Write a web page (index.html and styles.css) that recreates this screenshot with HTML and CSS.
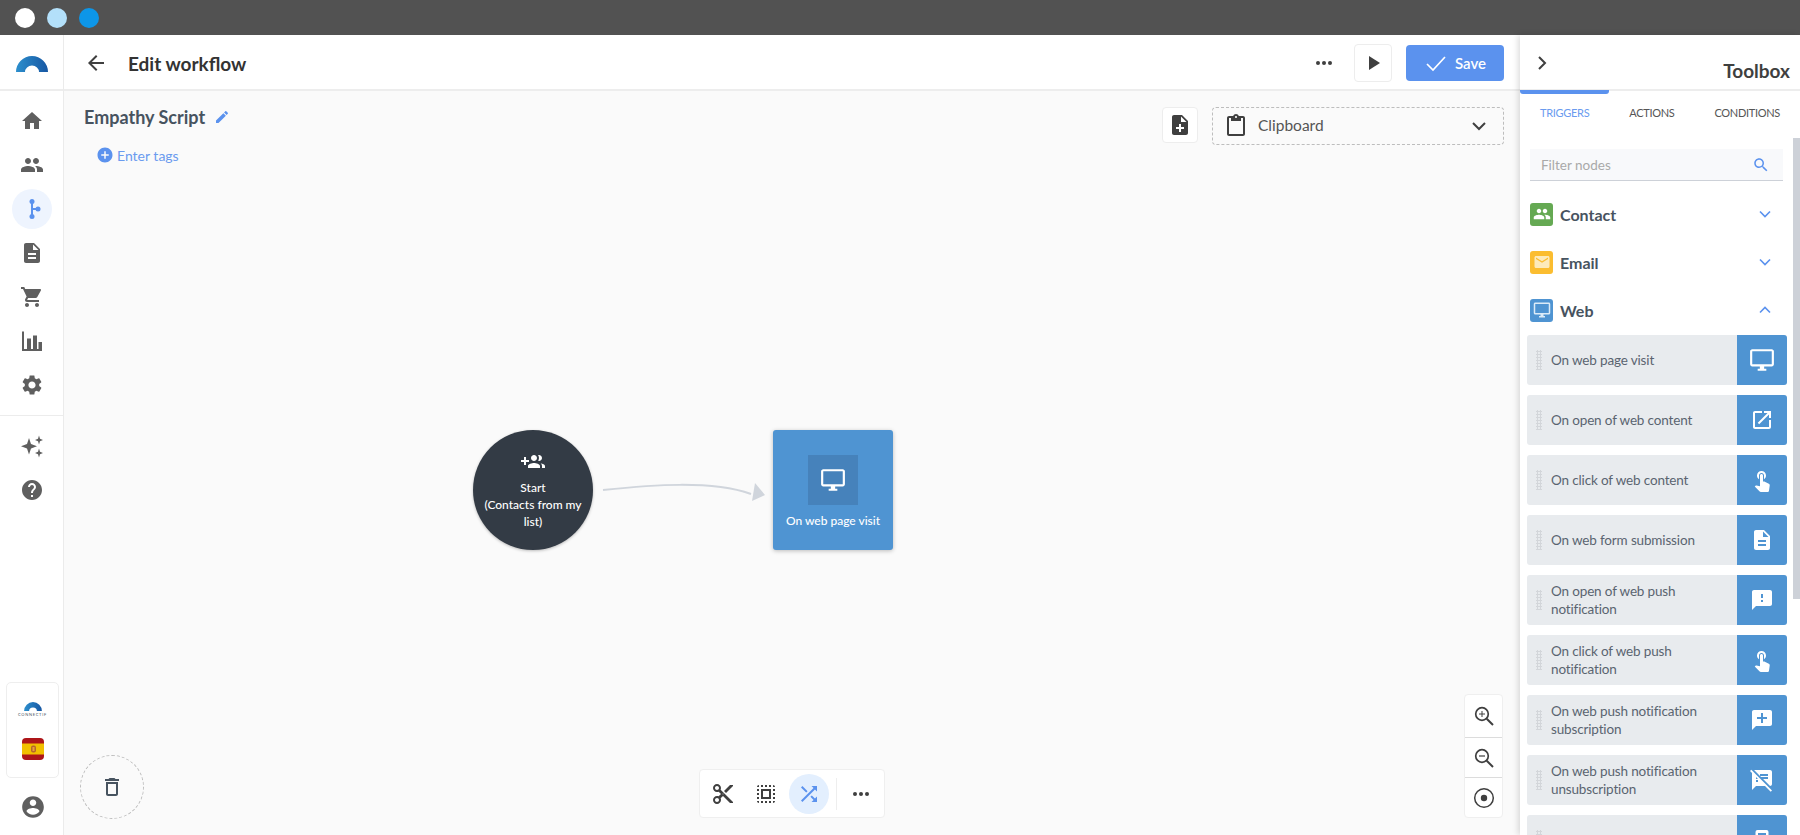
FILE: index.html
```html
<!DOCTYPE html>
<html lang="en">
<head>
<meta charset="utf-8">
<title>Edit workflow</title>
<link rel="stylesheet" href="styles.css">
</head>
<body>
<svg class="sprite" xmlns="http://www.w3.org/2000/svg">
  <defs>
    <linearGradient id="logoGrad" x1="0" x2="1" y1="0" y2="0"><stop offset="0" stop-color="#2c8fcd"/><stop offset="1" stop-color="#1757a3"/></linearGradient>
  </defs>
  <symbol id="i-home" viewBox="0 0 24 24"><path d="M10 20v-6h4v6h5v-8h3L12 3 2 12h3v8z"/></symbol>
  <symbol id="i-people" viewBox="0 0 24 24"><path d="M16 11c1.66 0 2.99-1.34 2.99-3S17.66 5 16 5c-1.66 0-3 1.34-3 3s1.34 3 3 3zm-8 0c1.66 0 2.99-1.34 2.99-3S9.66 5 8 5C6.34 5 5 6.34 5 8s1.34 3 3 3zm0 2c-2.33 0-7 1.17-7 3.5V19h14v-2.5c0-2.33-4.67-3.5-7-3.5zm8 0c-.29 0-.62.02-.97.05 1.16.84 1.97 1.97 1.97 3.45V19h6v-2.5c0-2.33-4.67-3.5-7-3.5z"/></symbol>
  <symbol id="i-flow" viewBox="0 0 24 24"><path d="M11 5h2v14h-2z"/><path d="M12 11h6v2h-6z"/><circle cx="12" cy="4.5" r="2.5"/><circle cx="12" cy="19.5" r="2.5"/><circle cx="18" cy="12" r="2.5"/></symbol>
  <symbol id="i-doc" viewBox="0 0 24 24"><path d="M14 2H6c-1.1 0-1.99.9-1.99 2L4 20c0 1.1.89 2 1.99 2H18c1.1 0 2-.9 2-2V8l-6-6zm2 16H8v-2h8v2zm0-4H8v-2h8v2zm-3-5V3.5L18.5 9H13z"/></symbol>
  <symbol id="i-cart" viewBox="0 0 24 24"><path d="M7 18c-1.1 0-1.99.9-1.99 2S5.9 22 7 22s2-.9 2-2-.9-2-2-2zM1 2v2h2l3.6 7.59-1.35 2.45c-.16.28-.25.61-.25.96 0 1.1.9 2 2 2h12v-2H7.42c-.14 0-.25-.11-.25-.25l.03-.12.9-1.63h7.45c.75 0 1.41-.41 1.75-1.03l3.58-6.49c.08-.14.12-.31.12-.48 0-.55-.45-1-1-1H5.21l-.94-2H1zm16 16c-1.1 0-1.99.9-1.99 2s.89 2 1.99 2 2-.9 2-2-.9-2-2-2z"/></symbol>
  <symbol id="i-chart" viewBox="0 0 24 24"><path d="M2 2.500h2V20h3V9.500h4V20h2V6.500h4V20h1.500v-7H22v9H2z"/></symbol>
  <symbol id="i-gear" viewBox="0 0 24 24"><path d="M19.14 12.94c.04-.3.06-.61.06-.94 0-.32-.02-.64-.07-.94l2.03-1.58c.18-.14.23-.41.12-.61l-1.92-3.32c-.12-.22-.37-.29-.59-.22l-2.39.96c-.5-.38-1.03-.7-1.62-.94l-.36-2.54c-.04-.24-.24-.41-.48-.41h-3.84c-.24 0-.43.17-.47.41l-.36 2.54c-.59.24-1.13.57-1.62.94l-2.39-.96c-.22-.08-.47 0-.59.22L2.74 8.87c-.12.21-.08.47.12.61l2.03 1.58c-.05.3-.09.63-.09.94s.02.64.07.94l-2.03 1.58c-.18.14-.23.41-.12.61l1.92 3.32c.12.22.37.29.59.22l2.39-.96c.5.38 1.03.7 1.62.94l.36 2.54c.05.24.24.41.48.41h3.84c.24 0 .44-.17.47-.41l.36-2.54c.59-.24 1.13-.56 1.62-.94l2.39.96c.22.08.47 0 .59-.22l1.92-3.32c.12-.22.07-.47-.12-.61l-2.01-1.58zM12 15.6c-1.98 0-3.6-1.62-3.6-3.6s1.62-3.6 3.6-3.6 3.6 1.62 3.6 3.6-1.62 3.6-3.6 3.6z"/></symbol>
  <symbol id="i-sparkle" viewBox="0 0 24 24"><path d="M19 1.500l1 3.300 3 1.200-3 1.200-1 3.300-1-3.300-3-1.200 3-1.200zM9 4l2 6 6 2.200-6 2.200-2 6-2-6-6-2.200 6-2.200zM19 14.500l1 3.200 3 1.300-3 1.300-1 3.200-1-3.200-3-1.300 3-1.300z"/></symbol>
  <symbol id="i-help" viewBox="0 0 24 24"><path d="M12 2C6.48 2 2 6.48 2 12s4.48 10 10 10 10-4.48 10-10S17.52 2 12 2zm1 17h-2v-2h2v2zm2.07-7.75l-.9.92C13.45 12.9 13 13.5 13 15h-2v-.5c0-1.1.45-2.1 1.17-2.83l1.24-1.26c.37-.36.59-.86.59-1.41 0-1.1-.9-2-2-2s-2 .9-2 2H8c0-2.21 1.79-4 4-4s4 1.79 4 4c0 .88-.36 1.68-.93 2.25z"/></symbol>
  <symbol id="i-account" viewBox="0 0 24 24"><path d="M12 2C6.48 2 2 6.48 2 12s4.48 10 10 10 10-4.48 10-10S17.52 2 12 2zm0 3c1.66 0 3 1.34 3 3s-1.34 3-3 3-3-1.34-3-3 1.34-3 3-3zm0 14.2c-2.5 0-4.71-1.28-6-3.22.03-1.99 4-3.08 6-3.08 1.99 0 5.97 1.09 6 3.08-1.29 1.94-3.5 3.22-6 3.22z"/></symbol>
  <symbol id="i-back" viewBox="0 0 24 24"><path d="M20 11H7.83l5.59-5.59L12 4l-8 8 8 8 1.41-1.41L7.83 13H20v-2z"/></symbol>
  <symbol id="i-edit" viewBox="0 0 24 24"><path d="M3 17.25V21h3.75L17.81 9.94l-3.75-3.75L3 17.25zM20.71 7.04c.39-.39.39-1.02 0-1.41l-2.34-2.34c-.39-.39-1.02-.39-1.41 0l-1.83 1.83 3.75 3.75 1.83-1.83z"/></symbol>
  <symbol id="i-add" viewBox="0 0 24 24"><path d="M12 2C6.48 2 2 6.48 2 12s4.48 10 10 10 10-4.48 10-10S17.52 2 12 2zm5 11h-4v4h-2v-4H7v-2h4V7h2v4h4v2z"/></symbol>
  <symbol id="i-play" viewBox="0 0 24 24"><path d="M8 5v14l11-7z"/></symbol>
  <symbol id="i-more" viewBox="0 0 24 24"><circle cx="6" cy="12" r="2"/><circle cx="12" cy="12" r="2"/><circle cx="18" cy="12" r="2"/></symbol>
  <symbol id="i-note" viewBox="0 0 24 24"><path d="M14 2H6c-1.1 0-1.99.9-1.99 2L4 20c0 1.1.89 2 1.99 2H18c1.1 0 2-.9 2-2V8l-6-6zm2 14h-3v3h-2v-3H8v-2h3v-3h2v3h3v2zm-3-7V3.5L18.5 9H13z"/></symbol>
  <symbol id="i-paste" viewBox="0 0 24 24"><path d="M19 2h-4.18C14.4.84 13.3 0 12 0c-1.3 0-2.4.84-2.82 2H5c-1.1 0-2 .9-2 2v16c0 1.1.9 2 2 2h14c1.1 0 2-.9 2-2V4c0-1.1-.9-2-2-2zm-7 0c.55 0 1 .45 1 1s-.45 1-1 1-1-.45-1-1 .45-1 1-1zm7 18H5V4h2v3h10V4h2v16z"/></symbol>
  <symbol id="i-search" viewBox="0 0 24 24"><path d="M15.5 14h-.79l-.28-.27C15.41 12.59 16 11.11 16 9.5 16 5.91 13.09 3 9.5 3S3 5.91 3 9.5 5.91 16 9.5 16c1.61 0 3.09-.59 4.23-1.57l.27.28v.79l5 4.99L20.49 19l-4.99-5zm-6 0C7.01 14 5 11.99 5 9.5S7.01 5 9.5 5 14 7.01 14 9.5 11.99 14 9.5 14z"/></symbol>
  <symbol id="i-desktop" viewBox="0 0 24 24"><path d="M21 2H3c-1.1 0-2 .9-2 2v12c0 1.1.9 2 2 2h7v2H8v2h8v-2h-2v-2h7c1.1 0 2-.9 2-2V4c0-1.1-.9-2-2-2zm0 14H3V4h18v12z"/></symbol>
  <symbol id="i-open" viewBox="0 0 24 24"><path d="M19 19H5V5h7V3H5c-1.11 0-2 .9-2 2v14c0 1.1.89 2 2 2h14c1.1 0 2-.9 2-2v-7h-2v7zM14 3v2h3.59l-9.83 9.83 1.41 1.41L19 6.41V10h2V3h-7z"/></symbol>
  <symbol id="i-touch" viewBox="0 0 24 24"><path d="M9 11.24V7.5C9 6.12 10.12 5 11.5 5S14 6.12 14 7.5v3.74c1.21-.81 2-2.18 2-3.74C16 5.01 13.99 3 11.5 3S7 5.01 7 7.5c0 1.56.79 2.93 2 3.74zm9.84 4.63l-4.54-2.26c-.17-.07-.35-.11-.54-.11H13v-6c0-.83-.67-1.5-1.5-1.5S10 6.67 10 7.5v10.74l-3.43-.72c-.08-.01-.15-.03-.24-.03-.31 0-.59.13-.79.33l-.79.8 4.94 4.94c.27.27.65.44 1.06.44h6.79c.75 0 1.33-.55 1.44-1.28l.75-5.27c.01-.07.02-.14.02-.2 0-.62-.38-1.16-.91-1.38z"/></symbol>
  <symbol id="i-failed" viewBox="0 0 24 24"><path d="M20 2H4c-1.1 0-1.99.9-1.99 2L2 22l4-4h14c1.1 0 2-.9 2-2V4c0-1.1-.9-2-2-2zm-7 12h-2v-2h2v2zm0-4h-2V6h2v4z"/></symbol>
  <symbol id="i-comment" viewBox="0 0 24 24"><path d="M20 2H4c-1.1 0-1.99.9-1.99 2L2 22l4-4h14c1.1 0 2-.9 2-2V4c0-1.1-.9-2-2-2zm-3 9h-4v4h-2v-4H7V9h4V5h2v4h4v2z"/></symbol>
  <symbol id="i-notesoff" viewBox="0 0 24 24"><path d="M10.54 11l-.54-.54L7.54 8 6 6.46 2.38 2.84 1.27 1.73 0 3l2.01 2.01L2 22l4-4h9l5.73 5.73L22 22.46 17.54 18l-7-7zM8 14H6v-2h2v2zm-2-3V9l2 2H6zm14-9H4.08L10 7.92V6h8v2h-7.92l1 1H18v2h-4.92l6.99 6.99C21.14 17.95 22 17.08 22 16V4c0-1.1-.9-2-2-2z"/></symbol>
  <symbol id="i-tablet" viewBox="0 0 24 24"><path fill-rule="evenodd" d="M7.500 2h9a2 2 0 0 1 2 2v16a2 2 0 0 1-2 2h-9a2 2 0 0 1-2-2V4a2 2 0 0 1 2-2zM8 5v7h8V5z"/></symbol>
  <symbol id="i-email" viewBox="0 0 24 24"><path d="M20 4H4c-1.1 0-1.99.9-1.99 2L2 18c0 1.1.9 2 2 2h16c1.1 0 2-.9 2-2V6c0-1.1-.9-2-2-2zm0 4l-8 5-8-5V6l8 5 8-5v2z"/></symbol>
  <symbol id="i-groupadd" viewBox="0 0 24 24"><path d="M8 10H5V7H3v3H0v2h3v3h2v-3h3v-2zm10 1c1.66 0 2.99-1.34 2.99-3S19.66 5 18 5c-.32 0-.63.05-.91.14.57.81.9 1.79.9 2.86s-.34 2.04-.9 2.86c.28.09.59.14.91.14zm-5 0c1.66 0 2.99-1.34 2.99-3S14.66 5 13 5s-3 1.34-3 3 1.34 3 3 3zm6.62 2.16c.83.73 1.38 1.66 1.38 2.84v2h3v-2c0-1.54-2.37-2.49-4.38-2.84zM13 13c-2 0-6 1-6 3v2h12v-2c0-2-4-3-6-3z"/></symbol>
  <symbol id="i-cut" viewBox="0 0 24 24"><path d="M9.64 7.64c.23-.5.36-1.05.36-1.64 0-2.21-1.79-4-4-4S2 3.79 2 6s1.79 4 4 4c.59 0 1.14-.13 1.64-.36L10 12l-2.36 2.36C7.14 14.13 6.59 14 6 14c-2.21 0-4 1.79-4 4s1.79 4 4 4 4-1.79 4-4c0-.59-.13-1.14-.36-1.64L12 14l7 7h3v-1L9.64 7.64zM6 8c-1.1 0-2-.89-2-2s.9-2 2-2 2 .89 2 2-.9 2-2 2zm0 12c-1.1 0-2-.89-2-2s.9-2 2-2 2 .89 2 2-.9 2-2 2zm6-7.5c-.28 0-.5-.22-.5-.5s.22-.5.5-.5.5.22.5.5-.22.5-.5.5zM19 3l-6 6 2 2 7-7V3z"/></symbol>
  <symbol id="i-select" viewBox="0 0 24 24"><path d="M3 5h2V3c-1.1 0-2 .9-2 2zm0 8h2v-2H3v2zm4 8h2v-2H7v2zM3 9h2V7H3v2zm10-6h-2v2h2V3zm6 0v2h2c0-1.1-.9-2-2-2zM5 21v-2H3c0 1.1.9 2 2 2zm-2-4h2v-2H3v2zM9 3H7v2h2V3zm2 18h2v-2h-2v2zm8-8h2v-2h-2v2zm0 8c1.1 0 2-.9 2-2h-2v2zm0-12h2V7h-2v2zm0 8h2v-2h-2v2zm-4 4h2v-2h-2v2zm0-16h2V3h-2v2zM7 17h10V7H7v10zm2-8h6v6H9V9z"/></symbol>
  <symbol id="i-shuffle" viewBox="0 0 24 24"><path d="M10.59 9.17L5.41 4 4 5.41l5.17 5.17 1.42-1.41zM14.5 4l2.04 2.04L4 18.59 5.41 20 17.96 7.46 20 9.5V4h-5.500zm.33 9.41l-1.41 1.41 3.13 3.13L14.5 20H20v-5.500l-2.04 2.04-3.13-3.13z"/></symbol>
  <symbol id="i-zoomin" viewBox="0 0 24 24"><g fill="none" stroke="currentColor"><circle cx="10" cy="10" r="6.300" stroke-width="1.700"/><path d="M14.700 14.700L21 21" stroke-width="2"/><path d="M7 10h6M10 7v6" stroke-width="1"/></g></symbol>
  <symbol id="i-zoomout" viewBox="0 0 24 24"><g fill="none" stroke="currentColor"><circle cx="10" cy="10" r="6.300" stroke-width="1.700"/><path d="M14.700 14.700L21 21" stroke-width="2"/><path d="M7 10h6" stroke-width="1.200"/></g></symbol>
  <symbol id="i-center" viewBox="0 0 24 24"><circle cx="12" cy="12" r="9.300" fill="none" stroke="currentColor" stroke-width="1.500"/><circle cx="12" cy="12" r="3.200"/></symbol>
  <symbol id="i-trash" viewBox="0 0 24 24"><path d="M6 19c0 1.1.9 2 2 2h8c1.1 0 2-.9 2-2V7H6v12zM8 9h8v10H8V9zm7.5-5l-1-1h-5l-1 1H5v2h14V4z"/></symbol>
  <symbol id="i-down" viewBox="0 0 24 24"><path d="M6 9l6 6 6-6" fill="none" stroke="currentColor" stroke-width="2"/></symbol>
  <symbol id="i-up" viewBox="0 0 24 24"><path d="M6 15l6-6 6 6" fill="none" stroke="currentColor" stroke-width="2"/></symbol>
  <symbol id="i-right" viewBox="0 0 24 24"><path d="M9 6l6 6-6 6" fill="none" stroke="currentColor" stroke-width="2"/></symbol>
  <symbol id="i-check" viewBox="0 0 24 24"><path d="M3 13l6 6L21 6" fill="none" stroke="currentColor" stroke-width="1.700"/></symbol>
</svg>

<div class="titlebar">
  <span class="dot dot-white"></span>
  <span class="dot dot-light"></span>
  <span class="dot dot-blue"></span>
</div>

<div class="app">
  <aside class="sidebar">
    <div class="side-logo">
      <svg class="logo" viewBox="0 0 32 18"><path fill="url(#logoGrad)" d="M0 18A16 16 0 0 1 32 18H23A7 6.500 0 0 0 9 18z"/></svg>
    </div>
    <nav class="side-nav">
      <a class="nav-item"><svg class="ic-24"><use href="#i-home"/></svg></a>
      <a class="nav-item"><svg class="ic-24"><use href="#i-people"/></svg></a>
      <a class="nav-item is-active"><svg class="ic-24"><use href="#i-flow"/></svg></a>
      <a class="nav-item"><svg class="ic-24"><use href="#i-doc"/></svg></a>
      <a class="nav-item"><svg class="ic-24"><use href="#i-cart"/></svg></a>
      <a class="nav-item"><svg class="ic-24"><use href="#i-chart"/></svg></a>
      <a class="nav-item"><svg class="ic-24"><use href="#i-gear"/></svg></a>
      <div class="nav-divider"></div>
      <a class="nav-item"><svg class="ic-24"><use href="#i-sparkle"/></svg></a>
      <a class="nav-item"><svg class="ic-24"><use href="#i-help"/></svg></a>
    </nav>
    <div class="side-bottom">
      <div class="tenant-card">
        <div class="tenant-logo">
          <svg class="logo-small" viewBox="0 0 32 18"><path fill="url(#logoGrad)" d="M0 18A16 16 0 0 1 32 18H23A7 6.500 0 0 0 9 18z"/></svg>
          <span class="tenant-name">CONNECTIF</span>
        </div>
        <svg class="flag" viewBox="0 0 22 22">
          <rect width="22" height="22" rx="4" fill="#ad1519"/>
          <rect y="5.500" width="22" height="11" fill="#f1bf00"/>
          <rect x="9" y="7.500" width="5" height="7" rx="2" fill="#b5642c"/>
          <rect x="10.500" y="9" width="2" height="4" fill="#e8a33a"/>
        </svg>
      </div>
      <a class="avatar"><svg class="ic-26"><use href="#i-account"/></svg></a>
    </div>
  </aside>

  <main class="main">
    <header class="main-header">
      <svg class="ic-24 ic-dark"><use href="#i-back"/></svg>
      <h1 class="page-title">Edit workflow</h1>
      <svg class="ic-24 ic-dark header-more"><use href="#i-more"/></svg>
      <button class="square-btn play-btn"><svg class="ic-24 ic-dark"><use href="#i-play"/></svg></button>
      <button class="save-btn"><svg class="ic-24"><use href="#i-check"/></svg><span>Save</span></button>
    </header>

    <section class="canvas">
      <div class="canvas-top">
        <div class="wf-info">
          <div class="wf-name">
            <span>Empathy Script</span>
            <svg class="ic-16 ic-blue"><use href="#i-edit"/></svg>
          </div>
          <div class="wf-tags">
            <svg class="ic-18 ic-blue"><use href="#i-add"/></svg>
            <span>Enter tags</span>
          </div>
        </div>
        <div class="clip-row">
          <button class="square-btn note-btn"><svg class="ic-24 ic-dark"><use href="#i-note"/></svg></button>
          <div class="clipboard">
            <svg class="ic-24 ic-dark"><use href="#i-paste"/></svg>
            <span class="clip-label">Clipboard</span>
            <svg class="ic-24 ic-dark clip-chev"><use href="#i-down"/></svg>
          </div>
        </div>
      </div>

      <svg class="edge" viewBox="0 0 180 40">
        <path d="M12 24C60 19 120 14 160 28" fill="none" stroke="#d0d5dc" stroke-width="2"/>
        <path d="M174 29L164 17L161 35z" fill="#d0d5dc"/>
      </svg>

      <div class="node-start">
        <svg class="ic-24"><use href="#i-groupadd"/></svg>
        <div class="node-start-text">Start<br>(Contacts from my<br>list)</div>
      </div>

      <div class="node-task">
        <div class="node-task-icon"><svg class="ic-26"><use href="#i-desktop"/></svg></div>
        <div class="node-task-text">On web page visit</div>
      </div>

      <button class="trash"><svg class="ic-24 ic-slate"><use href="#i-trash"/></svg></button>

      <div class="toolbar">
        <span class="tool"><svg class="ic-24 ic-dark"><use href="#i-cut"/></svg></span>
        <span class="tool"><svg class="ic-24 ic-dark"><use href="#i-select"/></svg></span>
        <span class="tool tool-on"><svg class="ic-24 ic-blue"><use href="#i-shuffle"/></svg></span>
        <span class="tool-sep"></span>
        <span class="tool"><svg class="ic-24 ic-dark"><use href="#i-more"/></svg></span>
      </div>

      <div class="zoombox">
        <span class="zoom-btn"><svg class="ic-24 ic-dark"><use href="#i-zoomin"/></svg></span>
        <span class="zoom-btn"><svg class="ic-24 ic-dark"><use href="#i-zoomout"/></svg></span>
        <span class="zoom-btn"><svg class="ic-24 ic-dark"><use href="#i-center"/></svg></span>
      </div>
    </section>
  </main>

  <aside class="toolbox">
    <header class="tb-header">
      <svg class="ic-24 ic-dark tb-toggle"><use href="#i-right"/></svg>
      <h2 class="tb-title">Toolbox</h2>
    </header>
    <div class="tb-tabs">
      <span class="tb-tab is-active">TRIGGERS</span>
      <span class="tb-tab">ACTIONS</span>
      <span class="tb-tab">CONDITIONS</span>
    </div>
    <div class="tb-body">
      <div class="tb-filter">
        <span>Filter nodes</span>
        <svg class="ic-18 ic-blue"><use href="#i-search"/></svg>
      </div>

      <div class="tb-section">
        <span class="sec-icon sec-green"><svg class="ic-18"><use href="#i-people"/></svg></span>
        <span class="sec-name">Contact</span>
        <svg class="ic-20 ic-blue"><use href="#i-down"/></svg>
      </div>
      <div class="tb-section">
        <span class="sec-icon sec-yellow"><svg class="ic-18"><use href="#i-email"/></svg></span>
        <span class="sec-name">Email</span>
        <svg class="ic-20 ic-blue"><use href="#i-down"/></svg>
      </div>
      <div class="tb-section">
        <span class="sec-icon sec-blue"><svg class="ic-18"><use href="#i-desktop"/></svg></span>
        <span class="sec-name">Web</span>
        <svg class="ic-20 ic-blue"><use href="#i-up"/></svg>
      </div>

      <ul class="tb-list">
        <li class="tb-item"><span class="grip"></span><span class="tb-text">On web page visit</span><span class="tb-icon"><svg class="ic-26"><use href="#i-desktop"/></svg></span></li>
        <li class="tb-item"><span class="grip"></span><span class="tb-text">On open of web content</span><span class="tb-icon"><svg class="ic-24"><use href="#i-open"/></svg></span></li>
        <li class="tb-item"><span class="grip"></span><span class="tb-text">On click of web content</span><span class="tb-icon"><svg class="ic-24"><use href="#i-touch"/></svg></span></li>
        <li class="tb-item"><span class="grip"></span><span class="tb-text">On web form submission</span><span class="tb-icon"><svg class="ic-24"><use href="#i-doc"/></svg></span></li>
        <li class="tb-item"><span class="grip"></span><span class="tb-text">On open of web push notification</span><span class="tb-icon"><svg class="ic-24"><use href="#i-failed"/></svg></span></li>
        <li class="tb-item"><span class="grip"></span><span class="tb-text">On click of web push notification</span><span class="tb-icon"><svg class="ic-24"><use href="#i-touch"/></svg></span></li>
        <li class="tb-item"><span class="grip"></span><span class="tb-text">On web push notification subscription</span><span class="tb-icon"><svg class="ic-24"><use href="#i-comment"/></svg></span></li>
        <li class="tb-item"><span class="grip"></span><span class="tb-text">On web push notification unsubscription</span><span class="tb-icon"><svg class="ic-24"><use href="#i-notesoff"/></svg></span></li>
        <li class="tb-item"><span class="grip"></span><span class="tb-text"></span><span class="tb-icon"><svg class="ic-24"><use href="#i-tablet"/></svg></span></li>
      </ul>
      <div class="tb-scroll"></div>
    </div>
  </aside>
</div>
</body>
</html>
```

FILE: styles.css
```css
* { box-sizing: border-box; }
html, body { margin: 0; height: 100%; }
body {
  width: 1800px;
  height: 835px;
  overflow: hidden;
  display: flex;
  flex-direction: column;
  background: #fff;
  color: #3d3d3d;
  font-family: "Lato", "Noto Sans", sans-serif;
  font-size: 14px;
}
button { font-family: inherit; padding: 0; cursor: pointer; }
h1, h2 { margin: 0; }
svg { fill: currentColor; flex: none; display: block; }
.sprite { position: absolute; width: 0; height: 0; }

.ic-16 { width: 16px; height: 16px; }
.ic-18 { width: 18px; height: 18px; }
.ic-20 { width: 20px; height: 20px; }
.ic-24 { width: 24px; height: 24px; }
.ic-26 { width: 26px; height: 26px; }
.ic-dark { color: #3f3f3f; }
.ic-blue { color: #5b92ee; }
.ic-slate { color: #47535f; }

/* window bar */
.titlebar {
  height: 35px;
  flex: none;
  background: #525252;
  display: flex;
  align-items: center;
  gap: 12px;
  padding-left: 15px;
}
.dot { width: 20px; height: 20px; border-radius: 50%; }
.dot-white { background: #fff; }
.dot-light { background: #b3e0fa; }
.dot-blue { background: #0d96e8; }

.app { flex: 1; display: flex; min-height: 0; }

/* sidebar */
.sidebar {
  width: 64px;
  flex: none;
  display: flex;
  flex-direction: column;
  border-right: 1px solid #ebebeb;
  background: #fff;
}
.side-logo {
  height: 56px;
  flex: none;
  display: flex;
  align-items: center;
  justify-content: center;
  padding-top: 2px;
  border-bottom: 2px solid #ededed;
}
.logo { width: 32px; height: 18px; }
.side-nav { padding-top: 8px; display: flex; flex-direction: column; align-items: center; }
.nav-item {
  width: 40px;
  height: 40px;
  margin: 2px 0;
  display: flex;
  align-items: center;
  justify-content: center;
  border-radius: 50%;
  color: #5f5f5f;
}
.nav-item.is-active { background: #eef4fe; color: #5b92ee; }
.nav-divider { width: 100%; height: 1px; background: #ececec; margin: 8px 0; }
.side-bottom {
  margin-top: auto;
  padding: 0 4px 15px 6px;
  display: flex;
  flex-direction: column;
  align-items: center;
}
.tenant-card {
  width: 53px;
  height: 96px;
  border: 1px solid #eeeeee;
  border-radius: 5px;
  display: flex;
  flex-direction: column;
  align-items: center;
  padding-top: 18px;
  gap: 20px;
  background: #fff;
}
.tenant-logo { display: flex; flex-direction: column; align-items: center; gap: 1px; }
.logo-small { width: 18px; height: 10px; }
.tenant-name { font-size: 4px; letter-spacing: .7px; line-height: 6px; color: #47535f; }
.flag { width: 22px; height: 22px; }
.avatar { margin-top: 16px; color: #5f5f5f; display: block; }

/* main */
.main { flex: 1; min-width: 0; display: flex; flex-direction: column; }
.main-header {
  height: 56px;
  flex: none;
  display: flex;
  align-items: center;
  padding: 2px 16px 0 20px;
  border-bottom: 2px solid #ededed;
  background: #fff;
}
.page-title { font-size: 19px; font-weight: 700; color: #333; margin-left: 20px; margin-right: auto; }
.header-more { margin-right: 18px; }
.square-btn {
  background: #fff;
  border: 1px solid #ededed;
  border-radius: 4px;
  display: flex;
  align-items: center;
  justify-content: center;
}
.play-btn { width: 38px; height: 38px; margin-right: 14px; }
.save-btn {
  width: 98px;
  height: 36px;
  background: #5b92ee;
  border: 0;
  border-radius: 4px;
  color: #fff;
  font-size: 15px;
  font-weight: 600;
  display: flex;
  align-items: center;
  padding-left: 18px;
  gap: 7px;
}
.canvas { flex: 1; position: relative; background: #fafafa; overflow: hidden; }
.canvas-top {
  display: flex;
  justify-content: space-between;
  align-items: flex-start;
  padding: 16px 16px 0 20px;
}
.wf-info { display: flex; flex-direction: column; }
.wf-name {
  display: flex;
  align-items: center;
  gap: 9px;
  font-size: 18px;
  font-weight: 700;
  color: #47535f;
  height: 22px;
  margin-top: -1px;
}
.wf-tags {
  display: flex;
  align-items: center;
  gap: 3px;
  margin: 18px 0 0 12px;
  font-size: 14px;
  color: #6a9bef;
}
.clip-row { display: flex; gap: 14px; align-items: flex-start; }
.note-btn { width: 36px; height: 36px; }
.clipboard {
  width: 292px;
  height: 38px;
  border: 1px dashed #bdbdbd;
  border-radius: 4px;
  display: flex;
  align-items: center;
  padding: 0 12px 0 11px;
  gap: 10px;
  font-size: 15.500px;
  color: #555;
}
.clip-label { margin-bottom: 3px; }
.clip-chev { margin-left: auto; }

.edge { position: absolute; left: 527px; top: 375px; width: 180px; height: 40px; }
.node-start {
  position: absolute;
  left: 409px;
  top: 339px;
  width: 120px;
  height: 120px;
  border-radius: 50%;
  background: #333b45;
  box-shadow: 0 1px 3px rgba(0,0,0,.25);
  color: #fff;
  display: flex;
  flex-direction: column;
  align-items: center;
  padding-top: 20px;
}
.node-start-text { font-size: 12px; font-weight: 500; line-height: 17px; text-align: center; margin-top: 5px; }
.node-task {
  position: absolute;
  left: 709px;
  top: 339px;
  width: 120px;
  height: 120px;
  border-radius: 3px;
  background: #4f94d2;
  box-shadow: 0 1px 4px rgba(0,0,0,.25);
  color: #fff;
  display: flex;
  flex-direction: column;
  align-items: center;
  padding-top: 25px;
}
.node-task-icon {
  width: 50px;
  height: 50px;
  background: #4682bb;
  display: flex;
  align-items: center;
  justify-content: center;
}
.node-task-text { font-size: 12px; font-weight: 500; margin-top: 8px; }

.trash {
  position: absolute;
  left: 16px;
  bottom: 16px;
  width: 64px;
  height: 64px;
  border-radius: 50%;
  border: 1px dashed #bdbdbd;
  background: transparent;
  display: flex;
  align-items: center;
  justify-content: center;
}
.toolbar {
  position: absolute;
  left: 635px;
  bottom: 17px;
  width: 186px;
  height: 49px;
  background: #fff;
  border: 1px solid #efefef;
  border-radius: 4px;
  display: flex;
  align-items: center;
  gap: 3px;
  padding-left: 3px;
}
.tool { width: 40px; height: 40px; border-radius: 50%; display: flex; align-items: center; justify-content: center; }
.tool-on { background: #e3effe; }
.tool-sep { width: 1px; height: 32px; background: #eeeeee; margin: 0 1px 0 4px; }
.zoombox {
  position: absolute;
  right: 17px;
  bottom: 17px;
  width: 39px;
  height: 124px;
  background: #fff;
  border: 1px solid #efefef;
  border-radius: 4px;
  display: flex;
  flex-direction: column;
}
.zoom-btn { height: 40px; flex: none; display: flex; align-items: center; justify-content: center; }
.zoom-btn:first-child { height: 42px; }
.zoom-btn + .zoom-btn { border-top: 1px solid #dcdcdc; }

/* toolbox */
.toolbox {
  width: 280px;
  flex: none;
  background: #fff;
  box-shadow: -2px 0 6px rgba(0,0,0,.14);
  display: flex;
  flex-direction: column;
  position: relative;
  z-index: 1;
}
.tb-header {
  height: 56px;
  flex: none;
  display: flex;
  border-bottom: 2px solid #ededed;
  justify-content: space-between;
  padding: 16px 10px 0 10px;
}
.tb-title { font-size: 19px; font-weight: 700; color: #3f3f3f; line-height: 24px; margin-top: 8px; }
.tb-tabs { display: flex; justify-content: space-between; height: 48px; flex: none; margin-top: -1px; padding-right: 20px; }
.tb-tab { font-size: 11px; letter-spacing: -.3px; color: #555; display: flex; align-items: center; height: 44px; position: relative; }
.tb-tab:first-child { margin-left: 20px; }
.tb-tab.is-active { color: #6a9bef; }
.tb-tab.is-active::before {
  content: "";
  position: absolute;
  left: -20px;
  right: -20px;
  top: 0;
  height: 4px;
  background: #5b92ee;
  border-radius: 0 0 3px 3px;
}
.tb-body { flex: 1; min-height: 0; position: relative; overflow: hidden; padding: 11px 7px 0; }
.tb-filter {
  width: 253px;
  height: 32px;
  margin-left: 3px;
  background: #f8f9fb;
  border-bottom: 1px solid #cdd1d8;
  display: flex;
  align-items: center;
  justify-content: space-between;
  padding: 0 13px 0 11px;
  color: #a9a9a9;
  font-size: 13.500px;
}
.tb-section {
  height: 48px;
  width: 260px;
  display: flex;
  align-items: center;
  padding: 0 12px 0 3px;
}
.tb-filter + .tb-section { margin-top: 9px; }
.sec-icon {
  width: 23px;
  height: 23px;
  border-radius: 3px;
  display: flex;
  align-items: center;
  justify-content: center;
  color: #fff;
}
.sec-green { background: #65a953; }
.sec-yellow { background: #fbbd30; color: #fdeaba; }
.sec-blue { background: #4f94d2; color: #dcebf8; }
.sec-name { margin-left: 7px; flex: 1; font-size: 16px; font-weight: 700; color: #47535f; }
.tb-list { list-style: none; margin: 1px 0 0; padding: 0; display: flex; flex-direction: column; gap: 10px; width: 260px; }
.tb-item {
  height: 50px;
  flex: none;
  display: flex;
  align-items: center;
  background: #e8ebee;
  border-radius: 3px;
  overflow: hidden;
}
.grip {
  width: 6px;
  height: 20px;
  margin-left: 9px;
  background-image: radial-gradient(circle, #d3d6da 1px, transparent 1.200px);
  background-size: 3px 3px;
  flex: none;
}
.tb-text { flex: 1; padding: 0 8px 0 9px; font-size: 13.500px; letter-spacing: -.15px; line-height: 18px; color: #5a6470; }
.tb-icon {
  width: 50px;
  height: 50px;
  flex: none;
  background: #4f94d2;
  color: #fff;
  display: flex;
  align-items: center;
  justify-content: center;
}
.tb-scroll {
  position: absolute;
  right: 0;
  top: 0;
  width: 7px;
  height: 461px;
  background: #cdd1d8;
}
```
